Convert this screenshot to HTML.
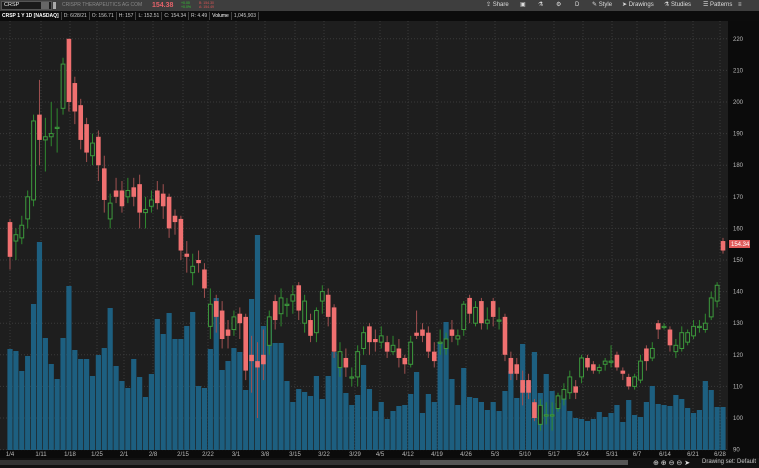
<!DOCTYPE html>
<html><head><meta charset="utf-8"><style>
*{margin:0;padding:0;box-sizing:border-box}
body{width:759px;height:468px;overflow:hidden;background:#1d1d1d;font-family:"Liberation Sans",sans-serif;position:relative}
.top{position:absolute;left:0;top:0;width:759px;height:11px;background:#3e3e3e;font-size:6px;color:#ddd}
.info{position:absolute;left:0;top:11px;width:759px;height:10px;background:#0c0c0c;font-size:5px;color:#ccc;white-space:nowrap;padding-top:1px}
.info span{display:inline-block;height:8px;line-height:8px;border-right:1px solid #444;padding:0 2px;vertical-align:top}
.top span{position:absolute;top:2px;line-height:7px;white-space:nowrap}
.bot{position:absolute;left:0;top:458px;width:759px;height:10px;background:#111;font-size:6px;color:#ccc}
</style></head><body>
<svg id="c" width="759" height="468" style="position:absolute;left:0;top:0"></svg>
<div class="top">
<div style="position:absolute;left:1px;top:1px;width:51px;height:9px;background:#1a1a1a;border:1px solid #555"></div>
<span style="left:4px;color:#eee;font-size:5.5px">CRSP</span>
<div style="position:absolute;left:41px;top:2px;width:8px;height:7px;background:#666"></div>
<div style="position:absolute;left:53px;top:2px;width:3px;height:7px;background:#aaa"></div>
<span style="left:62px;color:#888;font-size:5px">CRISPR THERAPEUTICS AG COM</span>
<span style="left:152px;color:#e4626a;font-size:7px;font-weight:bold;top:2px">154.38</span>
<span style="left:181px;color:#3c3;font-size:3.5px;top:1px;line-height:4px">+0.00<br>+0.0%</span>
<span style="left:199px;color:#d55;font-size:3.5px;top:1px;line-height:4px">B: 154.30<br>A: 154.49</span>
<span style="left:486px">⇪ Share</span>
<span style="left:520px">▣</span>
<span style="left:538px">⚗</span>
<span style="left:556px">⚙</span>
<span style="left:575px">D</span>
<span style="left:592px">✎ Style</span>
<span style="left:622px">➤ Drawings</span>
<span style="left:664px">⚗ Studies</span>
<span style="left:703px">☰ Patterns</span>
<span style="left:738px">≡</span>
</div>
<div class="info"><span style="color:#fff;font-weight:bold">CRSP 1 Y 1D [NASDAQ]</span><span>D: 6/28/21</span><span>O: 156.71</span><span>H: 157</span><span>L: 152.51</span><span>C: 154.34</span><span>R: 4.49</span><span style="color:#fff">Volume</span><span>1,045,903</span></div>
<div class="bot">
<div style="position:absolute;left:0;top:2px;width:420px;height:5px;background:#333"></div>
<div style="position:absolute;left:420px;top:2px;width:208px;height:5px;background:#555"></div>
<span style="position:absolute;left:653px;top:1px;font-size:7px;color:#ddd">⊕ ⊕ ⊖ ⊖ ➤</span>
<span style="position:absolute;left:702px;top:1px">Drawing set: Default</span>
</div>
<script>
var D=[[162,151,163,147],[156,158,160,150],[157,161,164,155],[163,170,172,160],[169,194,196,167],[196,188,207,180],[188,189,195,178],[189,190,200,186],[192,192,198,184],[198,212,214,196],[220,200,220,197],[206,197,208,193],[199,188,201,185],[193,184,195,181],[183,187,190,180],[189,180,191,175],[179,169,183,165],[163,168,171,160],[172,170,176,168],[172,167,175,165],[170,172,176,168],[173,170,176,167],[174,165,177,160],[165,166,170,160],[167,169,172,165],[172,168,175,166],[171,167,174,163],[170,160,171,157],[164,162,166,158],[163,153,164,150],[152,151,156,146],[146,148,152,142],[150,149,153,146],[147,141,149,138],[129,136,141,125],[137,132,139,127],[134,125,137,122],[128,126,131,122],[128,132,134,126],[133,130,135,125],[132,115,133,112],[120,118,126,108],[118,116,124,100],[120,117,128,112],[123,132,134,120],[137,131,139,128],[133,138,141,129],[136,136,138,132],[137,139,142,133],[142,134,143,131],[130,137,139,127],[131,126,133,124],[127,134,135,124],[137,140,142,133],[139,132,141,129],[135,121,136,119],[116,121,124,113],[119,116,122,113],[113,113,116,110],[113,121,123,110],[122,127,129,120],[129,124,130,120],[125,124,128,121],[124,126,129,122],[124,121,126,119],[121,123,126,120],[122,119,125,116],[119,117,120,114],[117,124,126,116],[127,126,134,125],[128,126,130,124],[127,121,129,119],[121,118,124,116],[124,124,128,120],[122,125,127,120],[128,126,131,124],[125,126,128,123],[128,136,137,126],[138,133,139,130],[130,135,137,129],[137,130,138,128],[130,131,135,128],[137,132,138,129],[131,131,135,128],[132,120,133,118],[119,114,121,112],[117,114,119,112],[112,108,115,104],[112,108,114,106],[105,100,106,99],[98,104,106,96],[101,101,105,98],[101,101,105,96],[103,107,108,102],[106,109,111,104],[108,113,115,106],[110,108,112,106],[113,119,120,111],[119,116,120,115],[117,115,118,114],[115,116,117,114],[117,118,119,115],[118,118,123,116],[120,116,121,115],[115,114,116,112],[113,110,114,109],[110,113,114,109],[112,118,120,111],[122,118,123,115],[119,122,124,118],[130,128,131,125],[129,129,130,128],[128,123,129,121],[121,123,125,119],[122,127,129,121],[124,127,128,123],[126,129,131,125],[129,129,131,127],[128,130,133,127],[132,138,140,131],[137,142,143,135],[156,153,157,152]];
var V=[349,351,371,356,304,242,338,364,379,338,286,350,359,359,376,355,348,308,366,381,388,359,377,397,374,319,334,313,339,339,326,312,386,388,349,298,370,361,348,352,390,299,235,326,320,343,343,381,402,389,392,396,376,399,376,352,354,393,405,395,365,389,411,402,419,411,406,405,394,372,413,394,402,342,322,379,405,368,397,398,402,410,402,411,391,371,398,344,381,352,393,374,391,403,395,411,418,419,421,419,412,417,413,405,422,400,415,417,402,386,404,405,406,395,399,408,413,410,381,390,407,407];
var s='';
s+='<rect x="0" y="21" width="728" height="429" fill="#1e1e1e"/><rect x="728" y="21" width="31" height="437" fill="#0b0b0b"/><rect x="0" y="450" width="728" height="8" fill="#0b0b0b"/>';
function Y(p){return 418-(p-100)*3.16}
for(var p=90;p<=220;p+=10){var y=Y(p);s+='<line x1="0" x2="728" y1="'+y+'" y2="'+y+'" stroke="#3a3a3a" stroke-dasharray="1,2"/><text x="733" y="'+(y+2)+'" fill="#bbb" font-size="6" font-family="Liberation Sans">'+p+'</text>';}
var L=[[10,'1/4'],[41,'1/11'],[70,'1/18'],[97,'1/25'],[124,'2/1'],[153,'2/8'],[183,'2/15'],[208,'2/22'],[236,'3/1'],[265,'3/8'],[295,'3/15'],[324,'3/22'],[355,'3/29'],[380,'4/5'],[408,'4/12'],[437,'4/19'],[466,'4/26'],[495,'5/3'],[525,'5/10'],[554,'5/17'],[583,'5/24'],[612,'5/31'],[637,'6/7'],[665,'6/14'],[693,'6/21'],[720,'6/28']];
L.forEach(function(l){s+='<line x1="'+l[0]+'" x2="'+l[0]+'" y1="21" y2="450" stroke="#3a3a3a" stroke-dasharray="1,2"/><text x="'+l[0]+'" y="456" fill="#bbb" font-size="6" text-anchor="middle" font-family="Liberation Sans">'+l[1]+'</text>';});
var n=D.length,px=(723-10)/(n-1);
for(var i=0;i<V.length&&i<n;i++){var x=10+i*px;s+='<rect x="'+(x-2.6)+'" y="'+V[i]+'" width="5.2" height="'+(450-V[i])+'" fill="#1d5f80"/>';}
for(var i=0;i<n;i++){var d=D[i],x=10+i*px,up=d[1]>=d[0]&&i<n-1,c=up?'#3d9a3d':'#f07070',w=up?'#2f8a2f':'#a05050';
var t=Y(Math.max(d[0],d[1])),b=Y(Math.min(d[0],d[1]));if(b-t<1.2)b=t+1.2;
s+='<line x1="'+x+'" x2="'+x+'" y1="'+Y(d[2])+'" y2="'+Y(d[3])+'" stroke="'+w+'" stroke-width="1"/>';
if(up)s+='<rect x="'+(x-1.9)+'" y="'+t+'" width="3.8" height="'+(b-t)+'" fill="#1e1e1e" stroke="'+c+'" stroke-width="1"/>';
else s+='<rect x="'+(x-2.3)+'" y="'+t+'" width="4.6" height="'+(b-t)+'" fill="'+c+'"/>';}
s+='<rect x="729" y="240" width="21" height="8" fill="#e05a5a"/><text x="731" y="246" fill="#fff" font-size="6" font-family="Liberation Sans">154.34</text>';
document.getElementById('c').innerHTML=s;
</script>
</body></html>
